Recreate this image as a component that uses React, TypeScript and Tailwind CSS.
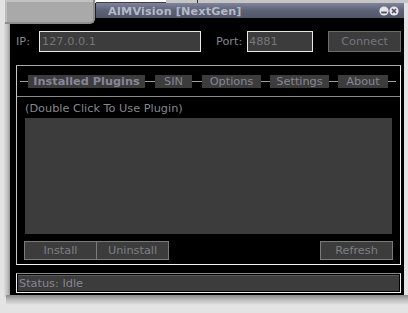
import React from "react";

const Tab = ({ label, w, bold }: { label: string; w: number; bold?: boolean }) => (
  <div
    className={`h-[13px] bg-[#3c3c3c] flex items-center justify-center pt-[1px] text-[11.3px] leading-[13px] ${bold ? "font-bold text-[#868698]" : "text-[#868692]"}`}
    style={{ width: w }}
  >
    {label}
  </div>
);

const Line = ({ w }: { w: number }) => (
  <div className="h-px bg-[#a0a0a0] self-center" style={{ width: w }} />
);

const Btn = ({ label, w, cls = "" }: { label: string; w: number; cls?: string }) => (
  <div
    className={`h-[19px] bg-[#3c3c3c] border border-[#7a7a7a] flex items-center justify-center pt-[2px] text-[11.3px] text-[#7e7e84] ${cls}`}
    style={{ width: w }}
  >
    {label}
  </div>
);

export default function App() {
  return (
    <div className="relative w-[408px] h-[313px] bg-[#e3e3e3] overflow-hidden font-['DejaVu_Sans',sans-serif]">
      {/* background window bits */}
      <div className="absolute left-[96px] top-0 w-[70px] h-[3px] bg-white border-b border-[#404040]" />
      <div className="absolute left-[166px] top-0 w-[242px] h-[3px] bg-[#c6c6c6]" />
      <div className="absolute left-[197px] top-0 w-px h-[3px] bg-[#303030]" />
      {/* left shading */}
      <div className="absolute left-[4px] top-[22px] w-[6px] h-[275px] bg-gradient-to-r from-[#dcdcdc] via-[#c4c4c4] to-[#9a9a9a]" />
      {/* bottom shadow */}
      <div className="absolute left-[6px] top-[295px] w-[402px] h-[10px] bg-gradient-to-b from-[#8a8a8a] via-[#bcbcbc] to-[#e3e3e3]" />

      {/* main window */}
      <div className="absolute left-[10px] top-[3px] w-[394px] flex flex-col">
        <div className="h-[15px] flex">
          <div className="w-[85px]" />
          <div className="flex-1 flex items-center border-l border-[#202020] bg-gradient-to-b from-[#80849a] via-[#5c6176] to-[#525769] pl-[12px] pr-[5px]">
            <span className="text-[11.2px] font-bold text-[#b4b8c8] leading-[15px] tracking-[0.15px] pt-[1px]">AIMVision [NextGen]</span>
            <div className="ml-auto flex items-center gap-0">
              <svg width="10" height="10" viewBox="0 0 10 10">
                <circle cx="5" cy="5" r="4.6" fill="#e6e6ea" />
                <rect x="2.2" y="5.6" width="5.6" height="1.8" fill="#4a4e5e" />
              </svg>
              <svg width="10" height="10" viewBox="0 0 10 10">
                <circle cx="5" cy="5" r="4.6" fill="#e6e6ea" />
                <path d="M3 3 L7 7 M7 3 L3 7" stroke="#4a4e5e" strokeWidth="1.6" />
              </svg>
            </div>
          </div>
        </div>

        <div className="bg-black h-[277px] flex flex-col pl-[6px] pr-[3px]">
          {/* connection row */}
          <div className="mt-[13px] h-[21px] flex items-center text-[11.3px]">
            <div className="w-[23px] pt-[2px] text-[#86868a]">IP:</div>
            <div className="w-[162px] h-[21px] border border-[#e8e8e8] bg-[#3c3c3c] flex items-center pl-[2px] pt-[2px] text-[#76767a]">127.0.0.1</div>
            <div className="ml-[15px] w-[31px] pt-[2px] text-[#86868a]">Port:</div>
            <div className="w-[66px] h-[21px] border border-[#e8e8e8] bg-[#3c3c3c] flex items-center pl-[1px] pt-[2px] text-[#76767a]">4881</div>
            <div className="ml-[15px] w-[73px] h-[21px] border border-[#6e6e6e] bg-[#3c3c3c] flex items-center justify-center pt-[2px] text-[#76767c]">Connect</div>
          </div>

          {/* group box */}
          <div className="mt-[13px] w-[385px] h-[200px] border border-t-[#a8a8a8] border-l-[#c8c8c8] border-r-[#f0f0f0] border-b-[#f4f4f4] flex flex-col">
            <div className="h-[31px] border-b border-[#8a8a8a] flex items-center pl-[3px]">
              <Line w={8} />
              <Tab label="Installed Plugins" w={117} bold />
              <Line w={10} />
              <Tab label="SIN" w={37} />
              <Line w={10} />
              <Tab label="Options" w={59} />
              <Line w={9} />
              <Tab label="Settings" w={59} />
              <Line w={9} />
              <Tab label="About" w={50} />
              <Line w={8} />
            </div>
            <div className="mt-[5px] pl-[8px] h-[14px] leading-[14px] text-[11.3px] text-[#86868e]">(Double Click To Use Plugin)</div>
            <div className="mt-[2px] ml-[8px] w-[367px] h-[116px] bg-[#3c3c3c]" />
            <div className="mt-[7px] flex pl-[7px] pr-[7px]">
              <Btn label="Install" w={73} />
              <Btn label="Uninstall" w={73} cls="-ml-px" />
              <Btn label="Refresh" w={73} cls="ml-auto" />
            </div>
          </div>

          {/* status bar */}
          <div className="mt-[8px] w-[385px] h-[20px] border border-t-[#8a8a8a] border-l-[#f0f0f0] border-r-[#f0f0f0] border-b-[#f4f4f4] p-px">
            <div className="h-full bg-[#3c3c3c] border-t border-[#5a5a5a] flex items-center pl-[1px] pt-[2px] text-[11.3px] text-[#868692]">Status: Idle</div>
          </div>
        </div>
      </div>

      {/* gray tab shape at top-left */}
      <div className="absolute left-[5px] top-0 w-[90px] h-[24px] bg-[#a9a9a9] rounded-br-[5px] border-r-2 border-b-2 border-[#8e8e8e] shadow-[inset_0_2px_0_#c2c2c2,inset_2px_0_0_#bdbdbd]" />
    </div>
  );
}
